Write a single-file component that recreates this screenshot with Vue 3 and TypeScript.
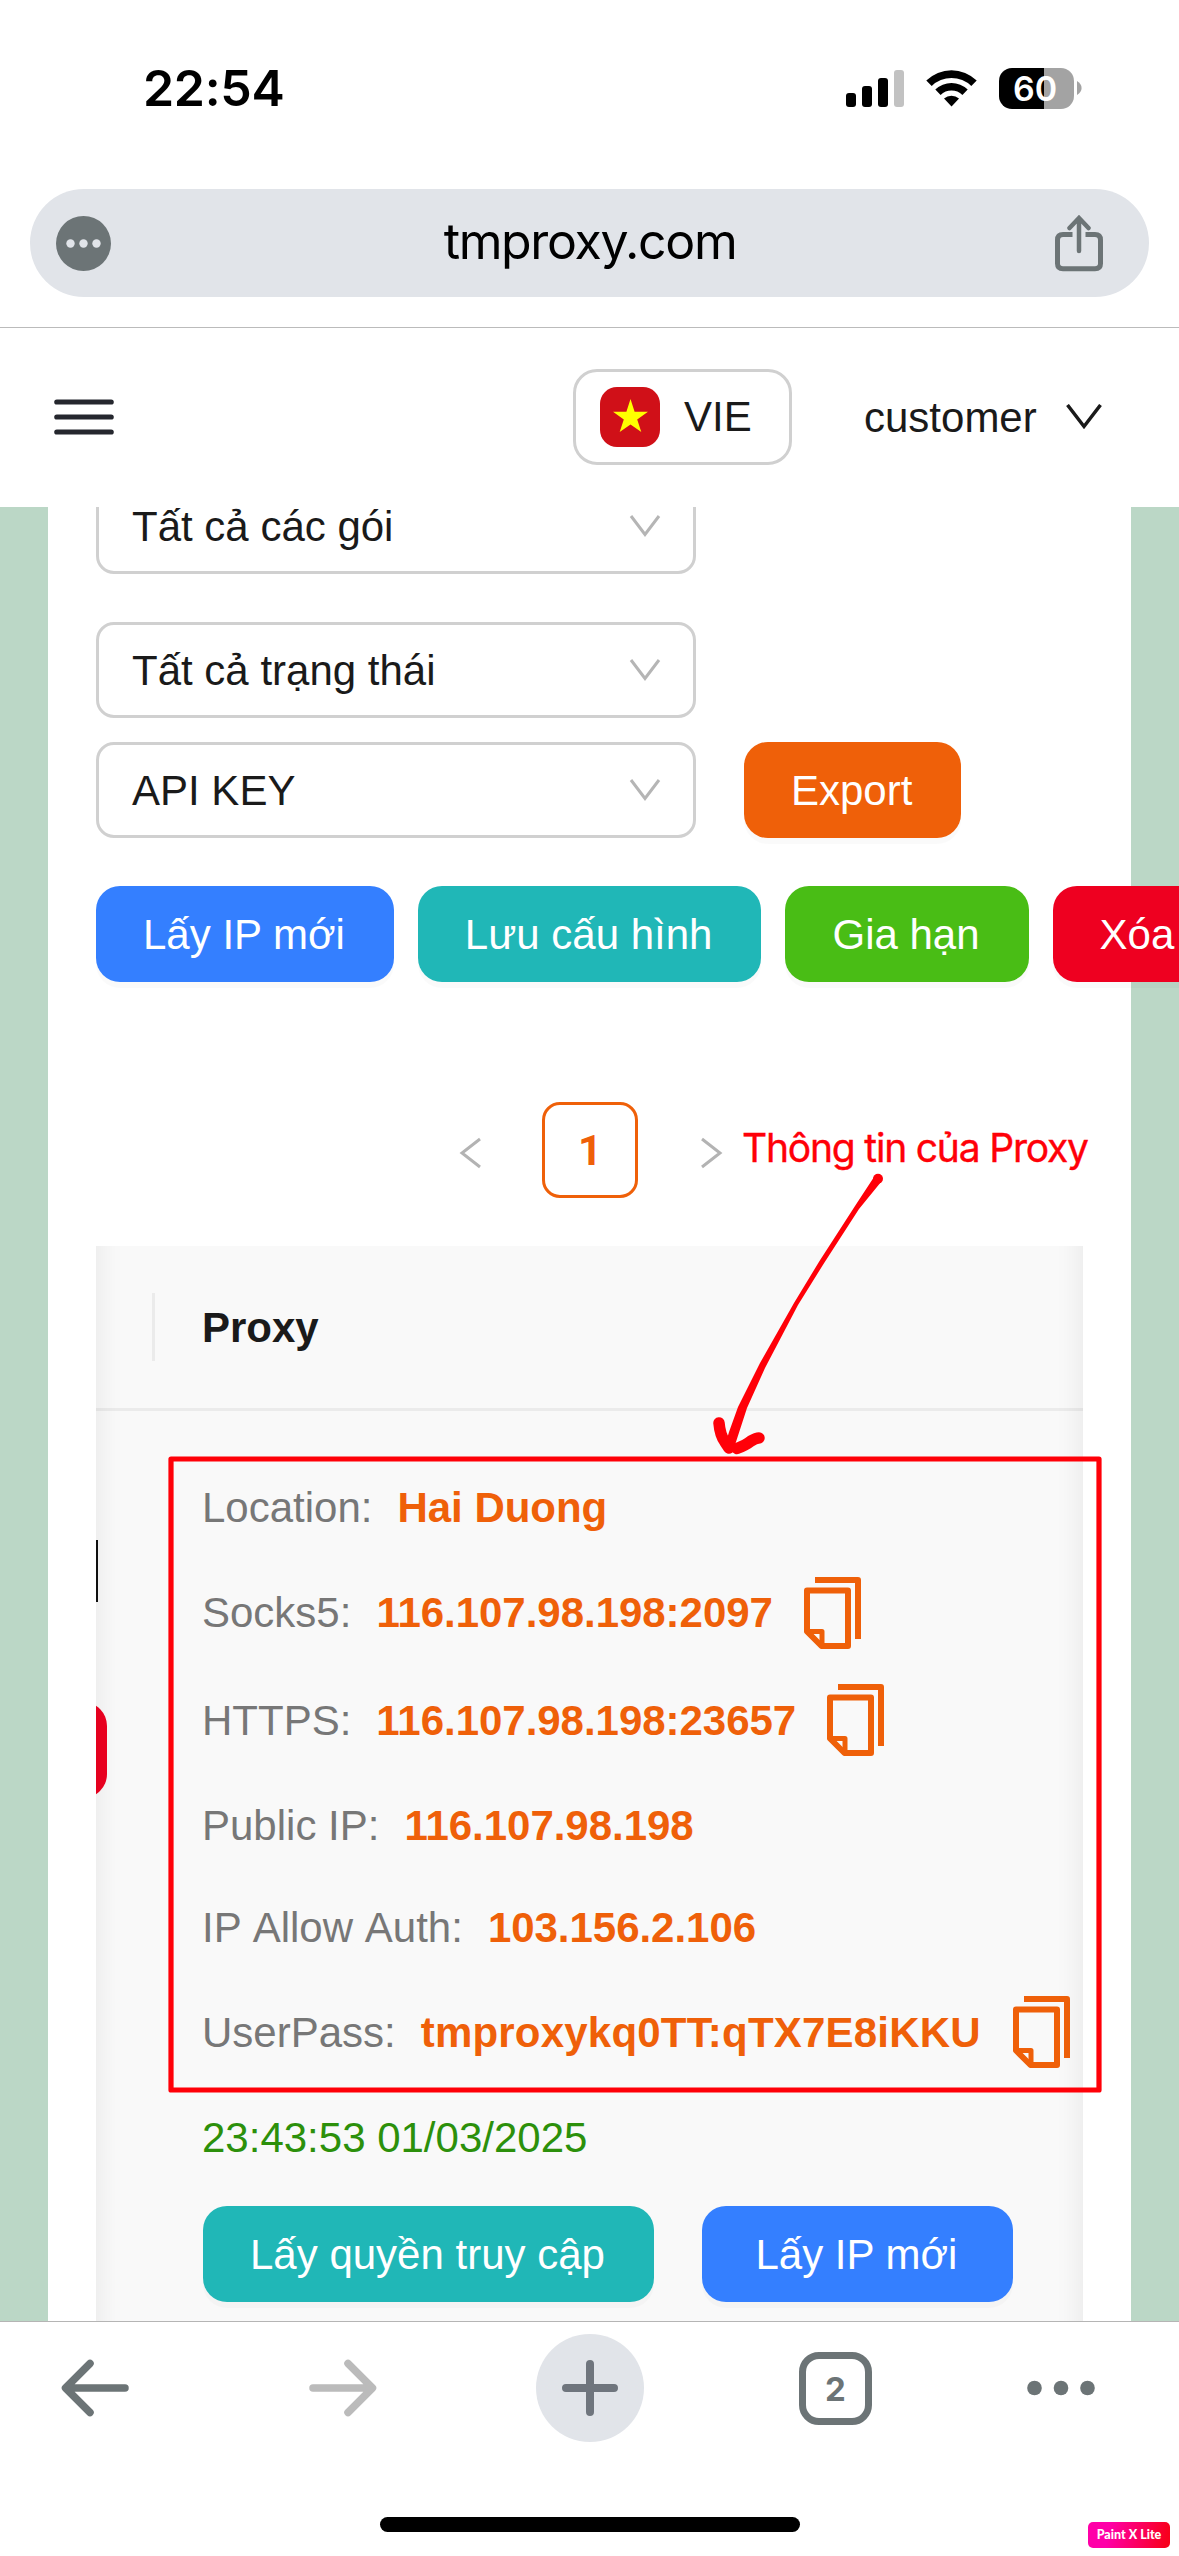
<script setup lang="ts">
interface Action {
  label: string
  tone: 'blue' | 'teal' | 'green' | 'red'
}
interface ProxyField {
  key: string
  label: string
  value: string
  copy?: boolean
}

const filters: string[] = ['Tất cả các gói', 'Tất cả trạng thái', 'API KEY']

const actions: Action[] = [
  { label: 'Lấy IP mới', tone: 'blue' },
  { label: 'Lưu cấu hình', tone: 'teal' },
  { label: 'Gia hạn', tone: 'green' },
  { label: 'Xóa', tone: 'red' },
]

const fields: ProxyField[] = [
  { key: 'location', label: 'Location:', value: 'Hai Duong' },
  { key: 'socks', label: 'Socks5:', value: '116.107.98.198:2097', copy: true },
  { key: 'https', label: 'HTTPS:', value: '116.107.98.198:23657', copy: true },
  { key: 'public', label: 'Public IP:', value: '116.107.98.198' },
  { key: 'allow', label: 'IP Allow Auth:', value: '103.156.2.106' },
  { key: 'userpass', label: 'UserPass:', value: 'tmproxykq0TT:qTX7E8iKKU', copy: true },
]
</script>

<template>
  <div class="screen">
    <div class="status">
      <span class="time">22:54</span>
      <div class="indicators">
        <svg class="signal" width="58" height="37" viewBox="0 0 58 37">
          <rect x="0" y="23" width="10" height="14" rx="3" />
          <rect x="16" y="16" width="10" height="21" rx="3" />
          <rect x="32" y="8" width="10" height="29" rx="3" />
          <rect x="48" y="0" width="10" height="37" rx="3" fill="#c2c2c2" />
        </svg>
        <svg class="wifi" width="51" height="37" viewBox="0 0 51 37">
          <path d="M0.3 10.6 A36 36 0 0 1 50.7 10.6 L45.3 15.9 A28.5 28.5 0 0 0 5.7 15.9 Z" />
          <path d="M9.3 19.5 A23.5 23.5 0 0 1 41.7 19.5 L36.4 24.9 A15.8 15.8 0 0 0 14.6 24.9 Z" />
          <path d="M18 28.6 A11.2 11.2 0 0 1 33 28.6 L25.5 36.6 Z" />
        </svg>
        <div class="battery"><span>60</span></div>
        <svg class="nub" width="5" height="14" viewBox="0 0 5 14"><path d="M0 0 Q4.6 3 4.6 7 Q4.6 11 0 14 Z" fill="#a3a3a3" /></svg>
      </div>
    </div>

    <div class="address">
      <div class="bar">
        <svg width="55" height="55" viewBox="0 0 55 55">
          <circle cx="27.5" cy="27.5" r="27.5" fill="#6c7476" />
          <g fill="#e1e4e9"><circle cx="14.5" cy="27.5" r="4.2" /><circle cx="27.5" cy="27.5" r="4.2" /><circle cx="40.5" cy="27.5" r="4.2" /></g>
        </svg>
        <span class="url">tmproxy.com</span>
        <svg width="48" height="57" viewBox="0 0 48 57" fill="none" stroke="#6c7476" stroke-width="5">
          <path d="M17.5 19.5 H8 Q2.5 19.5 2.5 25 V48.500 Q2.500 53.800 8 53.800 H40 Q45.500 53.800 45.500 48.500 V25 Q45.500 19.500 40 19.500 H30.500" />
          <path d="M24 36 V4 M14.500 13 L24 3 L33.500 13" stroke-width="4.500" stroke-linecap="round" />
        </svg>
      </div>
    </div>

    <header class="nav">
      <svg class="menu" width="60" height="38" viewBox="0 0 60 38" stroke="#25272e" stroke-width="5.200" stroke-linecap="round">
        <path d="M2.800 4 H57.200 M2.800 19 H57.200 M2.800 34 H57.200" />
      </svg>
      <div class="lang">
        <svg width="60" height="60" viewBox="0 0 60 60">
          <rect width="60" height="60" rx="17" fill="#d01018" />
          <path d="M30.500 12 L34.600 24.800 L48 24.800 L37.200 32.600 L41.300 45 L30.500 37.400 L19.700 45 L23.800 32.600 L13 24.800 L26.400 24.800 Z" fill="#ff0" />
        </svg>
        <span>VIE</span>
      </div>
      <span class="user">customer</span>
      <svg class="caret" width="36" height="26" viewBox="0 0 36 26" fill="none" stroke="#1a1a1a" stroke-width="3.500">
        <path d="M1.500 1 L18 22.500 L34.500 1" />
      </svg>
    </header>

    <main class="page">
      <section class="card">
        <div v-for="(name, i) in filters" :key="name" class="filter-row" :class="'f' + i">
          <div class="select">
            <span>{{ name }}</span>
            <svg width="32" height="22" viewBox="0 0 32 22" fill="none" stroke="#b5b5b5" stroke-width="3">
              <path d="M2 1 L16 19.500 L30 1" />
            </svg>
          </div>
          <button v-if="i === 2" class="btn orange">Export</button>
        </div>

        <div class="actions">
          <button v-for="a in actions" :key="a.label" class="btn" :class="a.tone">{{ a.label }}</button>
        </div>

        <div class="pager">
          <svg width="22" height="32" viewBox="0 0 22 32" fill="none" stroke="#b3b3b3" stroke-width="3"><path d="M21 2 L3 16 L21 30" /></svg>
          <span class="current">1</span>
          <svg width="22" height="32" viewBox="0 0 22 32" fill="none" stroke="#b3b3b3" stroke-width="3"><path d="M1 2 L19 16 L1 30" /></svg>
        </div>

        <div class="table">
          <div class="thead"><span>Proxy</span></div>
          <div class="cell">
            <div v-for="f in fields" :key="f.key" class="field" :class="f.key">
              <span class="label">{{ f.label }}</span>
              <b>{{ f.value }}</b>
              <svg v-if="f.copy" width="58" height="72" viewBox="0 0 58 72" fill="none" stroke="#ef6009" stroke-width="6" stroke-linejoin="round">
                <path d="M11 3 H54 V62" />
                <path d="M3 13.500 H44 V69 H17.500 L3 54.500 Z" />
                <path d="M3 54.500 H18 V69" stroke-width="5" />
              </svg>
            </div>
            <div class="expiry">23:43:53 01/03/2025</div>
            <div class="cell-actions">
              <button class="btn teal">Lấy quyền truy cập</button>
              <button class="btn blue wide">Lấy IP mới</button>
            </div>
          </div>
          <i class="clip-line"></i>
          <i class="clip-red"></i>
          <i class="edge left"></i>
          <i class="edge right"></i>
        </div>
      </section>
    </main>

    <footer class="toolbar">
      <svg width="68" height="58" viewBox="0 0 68 58" fill="none" stroke="#6c7476" stroke-width="7.500" stroke-linecap="round" stroke-linejoin="round">
        <path d="M64 29 H5 M29 4.500 L4.500 29 L29 53.500" />
      </svg>
      <svg class="fwd" width="68" height="58" viewBox="0 0 68 58" fill="none" stroke="#bbb" stroke-width="7.500" stroke-linecap="round" stroke-linejoin="round">
        <path d="M4 29 H63 M39 4.500 L63.500 29 L39 53.500" />
      </svg>
      <svg class="plus" width="108" height="108" viewBox="0 0 108 108">
        <circle cx="54" cy="54" r="54" fill="#e1e4e9" />
        <path d="M54 30 V78 M30 54 H78" stroke="#6f757d" stroke-width="8" stroke-linecap="round" />
      </svg>
      <div class="tabs">2</div>
      <svg class="more" width="68" height="16" viewBox="0 0 68 16" fill="#6c7476">
        <circle cx="7.500" cy="8" r="7.300" /><circle cx="34" cy="8" r="7.300" /><circle cx="60.500" cy="8" r="7.300" />
      </svg>
    </footer>
    <div class="home"></div>

    <svg class="marks" width="1179" height="2556" viewBox="0 0 1179 2556" fill="none" stroke="#ff0008" stroke-linejoin="round" stroke-linecap="round">
      <rect x="171" y="1459" width="928" height="631" stroke-width="5.200" />
      <circle cx="878" cy="1178.700" r="5" fill="#ff0008" stroke="none" />
      <path d="M874 1177 L881 1182 L859 1209 L823.500 1264 L798 1305 L765 1368 L747 1408 L734 1448 A5.500 5.500 0 0 1 724 1449 L729 1432 L738 1407 L760 1363 L794 1303 L819.500 1261 L855 1206 Z" fill="#ff0008" stroke="none" />
      <path d="M719 1423 Q720 1435 725 1442 L729 1448 M737 1448.500 Q746 1445 751 1441 Q756 1438 759 1438" stroke-width="11.500" />
    </svg>
    <span class="note">Thông tin của Proxy</span>
    <span class="badge">Paint X Lite</span>
  </div>
</template>

<style>
body {
  margin: 0;
  background: #fff;
}
</style>

<style scoped>
* {
  box-sizing: border-box;
}
.screen {
  position: relative;
  width: 1179px;
  height: 2556px;
  overflow: hidden;
  display: flex;
  flex-direction: column;
  background: #fff;
  color: #1a1a1a;
  font: 42px 'Liberation Sans', Arial, sans-serif;
}
svg {
  display: block;
  flex: none;
}
.status {
  height: 176px;
  flex: none;
  display: flex;
  justify-content: space-between;
  align-items: center;
  padding: 0 97px 0 143px;
  color: #000;
  font-family: Inter, sans-serif;
}
.time {
  font-size: 50px;
  font-weight: 600;
  letter-spacing: -0.3px;
}
.indicators {
  display: flex;
  align-items: center;
}
.wifi {
  margin-left: 22px;
}
.battery {
  width: 75px;
  height: 41px;
  margin-left: 22px;
  border-radius: 13px;
  background: linear-gradient(90deg, #000 45px, #a3a3a3 45px);
  color: #fff;
  font-size: 34px;
  font-weight: 600;
  line-height: 41px;
  text-align: center;
}
.battery span {
  display: block;
  margin-left: -3px;
}
.nub {
  margin-left: 3px;
}
.address {
  height: 152px;
  flex: none;
  padding: 13px 30px 0;
  border-bottom: 1px solid #bbb;
}
.bar {
  height: 108px;
  border-radius: 54px;
  background: #e1e4e9;
  display: flex;
  align-items: center;
  justify-content: space-between;
  padding: 0 46px 0 26px;
  color: #000;
}
.url {
  font: 50px Inter, sans-serif;
  letter-spacing: -1.35px;
  padding: 0 0 5px 14px;
}
.nav {
  height: 179px;
  flex: none;
  display: flex;
  align-items: center;
  padding-bottom: 1px;
}
.menu {
  margin-left: 54px;
}
.lang {
  width: 219px;
  height: 96px;
  margin-left: 459px;
  border: 3px solid #d0d0d0;
  border-radius: 24px;
  display: flex;
  align-items: center;
  padding-left: 24px;
}
.lang span {
  margin-left: 24px;
}
.user {
  margin-left: 72px;
  padding-top: 2px;
}
.caret {
  margin-left: 29px;
}
.page {
  height: 1814px;
  flex: none;
  overflow: hidden;
  background: #bbd7c6;
  padding: 0 48px;
}
.card {
  height: 1900px;
  margin-top: -29px;
  background: #fff;
  padding: 0 48px;
}
.filter-row {
  display: flex;
  gap: 48px;
}
.f1 {
  padding-top: 48px;
}
.f2 {
  padding-top: 24px;
}
.select {
  width: 600px;
  height: 96px;
  border: 3px solid #d0d0d0;
  border-radius: 18px;
  display: flex;
  align-items: center;
  justify-content: space-between;
  padding: 0 32px 0 33px;
}
.select span {
  padding-top: 2px;
}
.btn {
  flex: none;
  height: 96px;
  border: 0;
  border-radius: 24px;
  padding: 2px 48px 0 47px;
  border-right: 1px solid transparent;
  background-clip: border-box;
  color: #fff;
  font: inherit;
  white-space: nowrap;
  box-shadow: 0 6px 0 rgba(0, 0, 0, 0.02);
}
.orange {
  background: #ef6009;
}
.blue {
  background: #347fff;
}
.teal {
  background: #20b7b7;
}
.green {
  background: #49bd15;
}
.red {
  background: #ee0020;
}
.actions {
  display: flex;
  gap: 24px;
  padding-top: 48px;
}
.pager {
  display: flex;
  align-items: center;
  justify-content: center;
  gap: 62px;
  height: 96px;
  margin: 120px 0 48px;
  padding-left: 1px;
}
.pager svg {
  margin: 5px -1px 0 1px;
}
.current {
  width: 96px;
  height: 96px;
  border: 3px solid #ef6009;
  border-radius: 18px;
  color: #ef6009;
  font: 700 42px/91px Roboto, 'Liberation Sans', sans-serif;
  text-align: center;
}
.table {
  position: relative;
  height: 1100px;
  overflow: hidden;
  background: #f9f9f9;
}
.thead {
  height: 165px;
  border-bottom: 3px solid #ebebeb;
  display: flex;
  align-items: center;
  font-weight: 700;
}
.thead span {
  padding-top: 2px;
}
.thead::before {
  content: '';
  width: 3px;
  height: 68px;
  margin: 0 47px 0 56px;
  background: #ebebeb;
}
.cell {
  padding: 47px 0 0 106px;
}
.field {
  display: flex;
  align-items: center;
  white-space: nowrap;
}
.label {
  color: #777;
  margin-right: 25px;
}
.label,
.field b {
  padding-top: 1px;
}
.field b {
  color: #ef6009;
  letter-spacing: -0.03px;
}
.field svg {
  margin-left: 31px;
}
.location {
  height: 99px;
}
.socks {
  height: 111px;
}
.https {
  height: 104px;
}
.public {
  height: 106px;
}
.allow {
  height: 98px;
}
.allow .label {
  word-spacing: 2.4px;
}
.userpass {
  height: 112px;
}
.userpass b {
  letter-spacing: 0.2px;
}
.userpass svg {
  margin-left: 32px;
}
.expiry {
  height: 98px;
  line-height: 100px;
  color: #2c900b;
}
.cell-actions {
  display: flex;
  gap: 48px;
  padding: 20px 0 0 1px;
}
.wide {
  width: 311px;
}
.clip-line {
  position: absolute;
  left: 0;
  top: 294px;
  width: 2px;
  height: 62px;
  background: #111;
}
.clip-red {
  position: absolute;
  left: -60px;
  top: 456px;
  width: 71px;
  height: 96px;
  border-radius: 24px;
  background: #ee0020;
}
.edge {
  position: absolute;
  top: -60px;
  bottom: -60px;
  width: 90px;
}
.edge.left {
  left: 0;
  box-shadow: inset 30px 0 24px -24px rgba(5, 5, 5, 0.06);
}
.edge.right {
  right: 0;
  box-shadow: inset -30px 0 24px -24px rgba(5, 5, 5, 0.06);
}
.toolbar {
  height: 133px;
  flex: none;
  border-top: 1px solid #b5b5b5;
  display: flex;
  align-items: center;
  padding-left: 61px;
}
.fwd {
  margin-left: 180px;
}
.plus {
  margin-left: 159px;
}
.tabs {
  width: 73px;
  height: 73px;
  margin-left: 155px;
  border: 7px solid #6c7476;
  border-radius: 20px;
  color: #6c7476;
  font: 700 33px/60px Inter, sans-serif;
  text-align: center;
}
.more {
  margin-left: 155px;
}
.home {
  width: 420px;
  height: 15px;
  margin: 63px auto 0;
  border-radius: 8px;
  background: #000;
}
.marks {
  position: absolute;
  left: 0;
  top: 0;
}
.note {
  position: absolute;
  left: 742px;
  top: 1123px;
  color: #ff0008;
  font: 39px/50px Inter, sans-serif;
  letter-spacing: -1.2px;
  -webkit-text-stroke: 0.4px #ff0008;
  white-space: nowrap;
}
.badge {
  position: absolute;
  left: 1088px;
  top: 2522px;
  width: 82px;
  height: 26px;
  border-radius: 5px;
  background: linear-gradient(100deg, #ff00a8 25%, #f8001c 95%);
  color: #fff;
  font: 900 12.5px/25px Lato, sans-serif;
  text-align: center;
  white-space: nowrap;
}
</style>
